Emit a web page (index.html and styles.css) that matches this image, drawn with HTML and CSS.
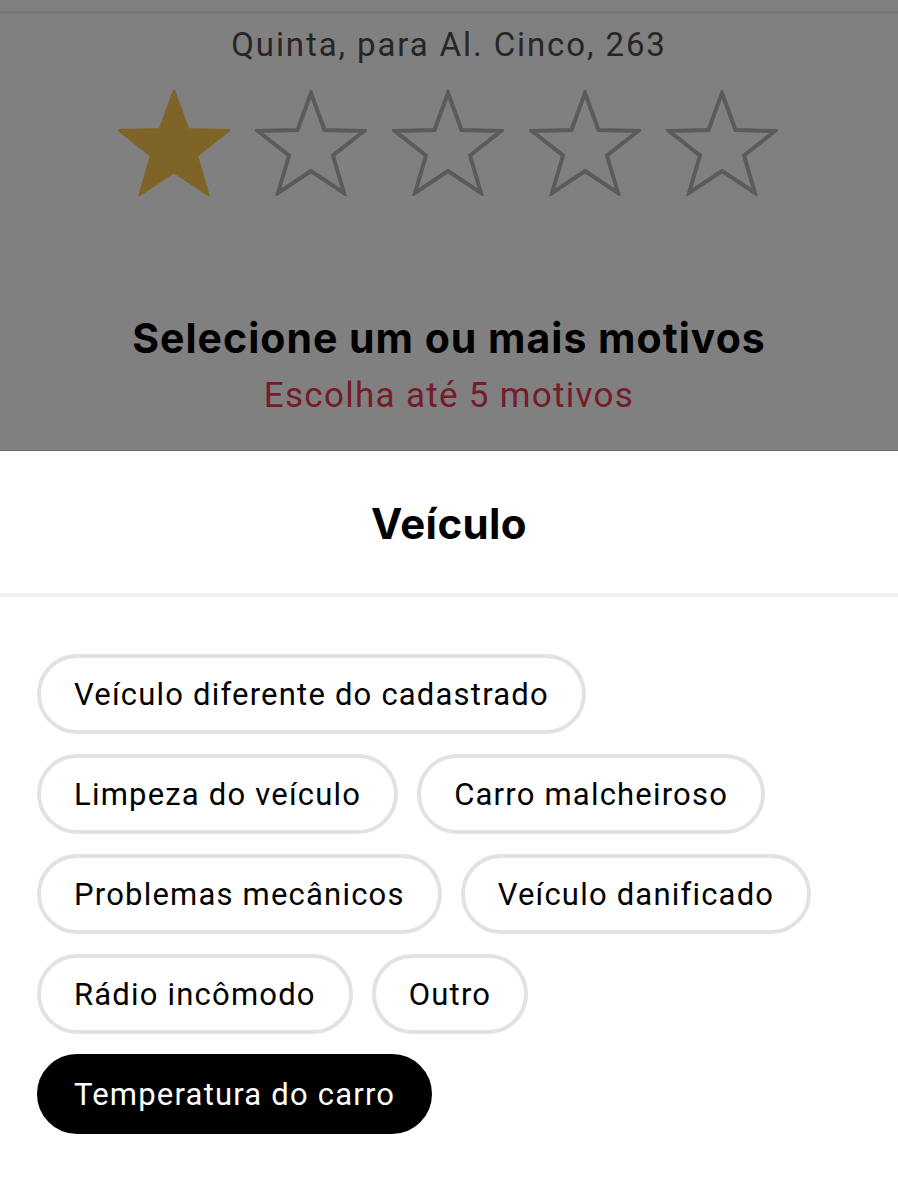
FILE: index.html
```html
<!DOCTYPE html>
<html lang="pt">
<head>
    <meta charset="UTF-8">
    <meta name="viewport" content="width=device-width, initial-scale=1.0">
    <title>Avaliar viagem</title>
    <link rel="stylesheet" href="styles.css">
</head>
<body>
    <div class="overlay">
        <div class="topo"></div>
        <p class="viagem">Quinta, para Al. Cinco, 263</p>

        <div class="estrelas">
            <svg class="estrela cheia" viewBox="0 0 112 106"><polygon points="56,3 69.5,40 109,41 78,65.5 89,103 56,81 23,103 34,65.5 3,41 42.5,40"/></svg>
            <svg class="estrela" viewBox="0 0 112 106"><polygon points="56,3 69.5,40 109,41 78,65.5 89,103 56,81 23,103 34,65.5 3,41 42.5,40"/></svg>
            <svg class="estrela" viewBox="0 0 112 106"><polygon points="56,3 69.5,40 109,41 78,65.5 89,103 56,81 23,103 34,65.5 3,41 42.5,40"/></svg>
            <svg class="estrela" viewBox="0 0 112 106"><polygon points="56,3 69.5,40 109,41 78,65.5 89,103 56,81 23,103 34,65.5 3,41 42.5,40"/></svg>
            <svg class="estrela" viewBox="0 0 112 106"><polygon points="56,3 69.5,40 109,41 78,65.5 89,103 56,81 23,103 34,65.5 3,41 42.5,40"/></svg>
        </div>

        <h2 class="titulo">Selecione um ou mais motivos</h2>
        <p class="aviso">Escolha até 5 motivos</p>
    </div>

    <div class="painel">
        <h3 class="categoria">Veículo</h3>
        <div class="divisor"></div>

        <div class="motivos">
            <button class="chip">Veículo diferente do cadastrado</button>
            <button class="chip">Limpeza do veículo</button>
            <button class="chip">Carro malcheiroso</button>
            <button class="chip">Problemas mecânicos</button>
            <button class="chip">Veículo danificado</button>
            <button class="chip">Rádio incômodo</button>
            <button class="chip">Outro</button>
            <button class="chip ativo">Temperatura do carro</button>
        </div>
    </div>
</body>
</html>
```

FILE: styles.css
```css
body {
    margin: 0;
    padding: 0;
    font-family: Roboto, "Liberation Sans", sans-serif;
    background-color: #ffffff;
    width: 898px;
}

/* parte escurecida atrás do painel */
.overlay {
    background-color: #808080;
    height: 451px;
    border-bottom: 1px solid #6e6e6e;
    box-sizing: border-box;
    text-align: center;
    overflow: hidden;
}

.topo {
    height: 11px;
    border-bottom: 3px solid #777777;
}

.viagem {
    margin: 12px 0 0;
    font-size: 33px;
    line-height: 38px;
    color: #262626;
    letter-spacing: 1.9px;
}

.estrelas {
    display: flex;
    justify-content: center;
    gap: 25px;
    margin-top: 26px;
    padding-right: 3px;
}

.estrela {
    width: 112px;
    height: 106px;
}

.estrela polygon {
    fill: none;
    stroke: #5b5b5b;
    stroke-width: 4;
    stroke-linejoin: miter;
}

.estrela.cheia polygon {
    fill: #7f6427;
    stroke: #7f6427;
}

.titulo {
    font-family: Inter, "Liberation Sans", sans-serif;
    font-weight: 700;
    font-size: 41px;
    line-height: 48px;
    letter-spacing: 1px;
    color: #000000;
    margin: 118px 0 0;
}

.aviso {
    margin: 14px 0 0;
    font-size: 35px;
    line-height: 40px;
    color: #761b29;
    letter-spacing: 1.3px;
}

/* painel branco */
.painel {
    background-color: #ffffff;
}

.categoria {
    font-family: Inter, "Liberation Sans", sans-serif;
    font-weight: 700;
    font-size: 42px;
    line-height: 50px;
    letter-spacing: 0.4px;
    text-align: center;
    margin: 0;
    padding: 48px 0 44px;
}

.divisor {
    height: 4px;
    background-color: #f1f1f1;
}

.motivos {
    display: flex;
    flex-wrap: wrap;
    gap: 20px 19px;
    padding: 57px 37px 40px;
}

.chip {
    font-family: Roboto, "Liberation Sans", sans-serif;
    font-size: 31px;
    letter-spacing: 1.2px;
    height: 80px;
    padding: 0 33px;
    border: 4px solid #e2e2e2;
    border-radius: 40px;
    background-color: #ffffff;
    color: #000000;
    box-sizing: border-box;
    cursor: pointer;
}

.chip.ativo {
    background-color: #000000;
    border-color: #000000;
    color: #ffffff;
}
```
